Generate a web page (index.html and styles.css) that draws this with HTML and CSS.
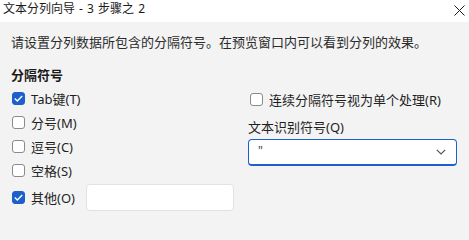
FILE: index.html
```html
<!DOCTYPE html>
<html lang="zh-CN">
<head>
<meta charset="utf-8">
<title>文本分列向导</title>
<link rel="stylesheet" href="styles.css">
</head>
<body>
<div class="titlebar">
  <span class="title">文本分列向导 - 3 步骤之 2</span>
  <svg class="close" width="11" height="11" viewBox="0 0 11 11"><path d="M0.5 0.5 L10.5 10.5 M10.5 0.5 L0.5 10.5" stroke="#1a1a1a" stroke-width="1"/></svg>
</div>
<div class="content">
  <p class="desc">请设置分列数据所包含的分隔符号。在预览窗口内可以看到分列的效果。</p>
  <div class="columns">
    <div class="left">
      <div class="heading">分隔符号</div>
      <label class="row"><span class="box checked"><svg width="9" height="7" viewBox="0 0 9 7"><path d="M0.8 3.6 L3.3 6 L8.2 0.9" fill="none" stroke="#fff" stroke-width="1.4"/></svg></span>Tab键(T)</label>
      <label class="row"><span class="box"></span>分号(M)</label>
      <label class="row"><span class="box"></span>逗号(C)</label>
      <label class="row"><span class="box"></span>空格(S)</label>
      <div class="row other">
        <label class="other-label"><span class="box checked"><svg width="9" height="7" viewBox="0 0 9 7"><path d="M0.8 3.6 L3.3 6 L8.2 0.9" fill="none" stroke="#fff" stroke-width="1.4"/></svg></span>其他(O)</label>
        <div class="textbox"></div>
      </div>
    </div>
    <div class="right">
      <label class="row"><span class="box"></span>连续分隔符号视为单个处理(R)</label>
      <div class="label">文本识别符号(Q)</div>
      <div class="select">
        <span class="value">"</span>
        <svg class="chev" width="10" height="6" viewBox="0 0 10 6"><path d="M0.8 0.8 L5 5 L9.2 0.8" fill="none" stroke="#555" stroke-width="1.2"/></svg>
      </div>
    </div>
  </div>
</div>
</body>
</html>
```

FILE: styles.css
```css
* { box-sizing: border-box; }
html, body {
  margin: 0;
  padding: 0;
  background: #f3f3f3;
  width: 469px;
  height: 224px;
  overflow: hidden;
  font-family: "Noto Sans", "Noto Sans CJK SC", sans-serif;
  color: #1a1a1a;
}
.titlebar {
  height: 22px;
  background: #ffffff;
  display: flex;
  align-items: center;
  justify-content: space-between;
  padding: 0 4px 4px 3px;
}
.title {
  font-size: 12px;
  line-height: 16px;
  word-spacing: 1px;
}
.close { display: block; margin-top: 2px; }
.content {
  padding: 11px 11px 0 11px;
}
.desc {
  margin: 0;
  font-size: 13px;
  line-height: 18px;
  color: #2b2b2b;
}
.columns {
  display: grid;
  grid-template-columns: 237px 1fr;
}
.left { padding-top: 15px; }
.heading {
  font-size: 13px;
  font-weight: 700;
  line-height: 18px;
  margin-bottom: 2px;
}
.row {
  display: flex;
  align-items: center;
  height: 24px;
  font-size: 13px;
  color: #1f1f1f;
}
.box {
  width: 13px;
  height: 13px;
  border: 1px solid #8a8a8a;
  border-radius: 3px;
  background: #fff;
  margin: 0 6px 0 1px;
  display: flex;
  align-items: center;
  justify-content: center;
  flex-shrink: 0;
}
.box.checked {
  background: #1d5fcb;
  border-color: #1d5fcb;
}
.row.other {
  height: 27px;
  margin-top: 2px;
}
.other-label {
  display: flex;
  align-items: center;
}
.textbox {
  width: 148px;
  height: 27px;
  margin-left: 11px;
  background: #fff;
  border: 1px solid #e2e2e2;
  border-radius: 4px;
}
.right { padding-top: 36px; }
.right .row .box { margin-left: 2px; }
.label {
  font-size: 13px;
  line-height: 18px;
  margin-top: 7px;
  color: #1f1f1f;
}
.select {
  margin-top: 3px;
  width: 209px;
  height: 27px;
  background: #fff;
  border: 1px solid #1d5fcb;
  border-bottom-width: 2px;
  border-radius: 4px;
  display: flex;
  align-items: center;
  justify-content: space-between;
  padding: 0 10px 0 9px;
}
.value {
  font-size: 12px;
  line-height: 14px;
  color: #444;
  align-self: flex-start;
  margin-top: 4px;
}
.chev { display: block; }
```
